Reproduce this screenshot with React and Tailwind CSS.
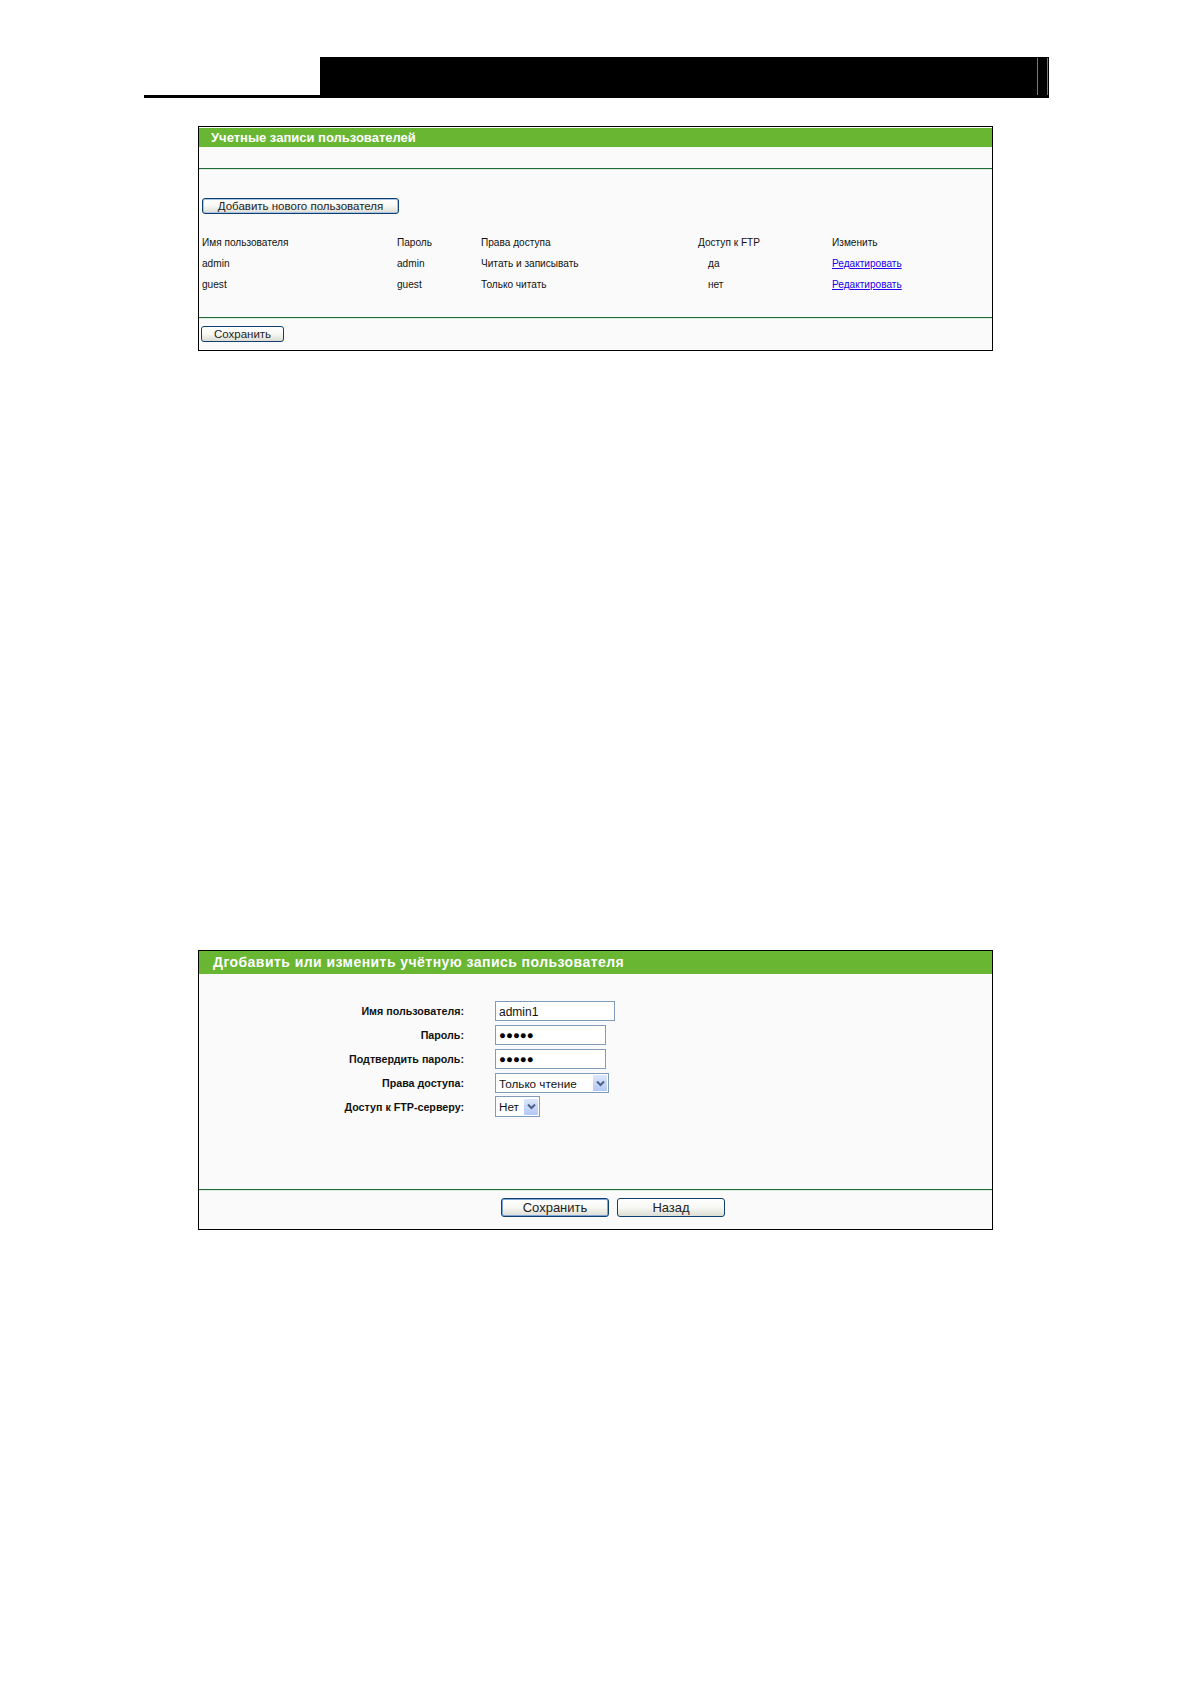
import React from 'react';

const rows = [
  { name: 'admin', password: 'admin', rights: 'Читать и записывать', ftp: 'да' },
  { name: 'guest', password: 'guest', rights: 'Только читать', ftp: 'нет' },
];

const COLS = 'grid grid-cols-[195px_84px_217px_134px_1fr] items-center h-[21px]';

function WinButton({ className, children }) {
  return (
    <button
      type="button"
      className={`flex items-center justify-center rounded-[3px] border border-[#0f3f6f] bg-gradient-to-b from-white via-[#f8f8f4] to-[#dcdcd4] pt-px text-[#222] ${className}`}
    >
      {children}
    </button>
  );
}

function SelectBox({ className, value }) {
  return (
    <div className={`flex items-center justify-between border border-[#7f9db9] bg-white pl-[3px] pr-px text-[11.7px] text-[#111] ${className}`}>
      <span className="pt-px">{value}</span>
      <span className="flex h-[16px] w-[14px] items-center justify-center rounded-[1px] bg-gradient-to-b from-[#dce6fb] to-[#b4c8f4]">
        <svg width="9" height="7" viewBox="0 0 9 7" fill="none" stroke="#4d6185" strokeWidth="2">
          <path d="M1 1.5l3.5 3.5L8 1.5" />
        </svg>
      </span>
    </div>
  );
}

function FormRow({ label, className, children }) {
  return (
    <div className={`flex items-center ${className}`}>
      <div className="w-[265px] pt-px text-right text-[10.7px] font-bold text-[#111]">{label}</div>
      <div className="ml-[31px]">{children}</div>
    </div>
  );
}

function PasswordBox() {
  return (
    <div className="flex h-[20px] w-[111px] items-center border border-[#7f9db9] bg-white pl-[3px] pt-px text-[11.5px] leading-none text-black">●●●●●</div>
  );
}

function Divider() {
  return <div className="h-[2px] border-t border-[#1c6b35] bg-[#dfe8df]" />;
}

export default function App() {
  return (
    <div className="h-[1684px] bg-white pt-[57px] font-['Liberation_Sans',Arial,sans-serif]">
      {/* page header band */}
      <div className="ml-[144px] flex h-[41px] w-[905px] items-end">
        <div className="h-[3px] w-[176px] bg-black" />
        <div className="flex h-[41px] flex-1 justify-end gap-[9px] bg-black pr-[1px] pt-[1px]">
          <div className="h-[37px] w-px bg-[#777]" />
          <div className="h-[37px] w-px bg-[#777]" />
        </div>
      </div>

      {/* accounts list */}
      <div className="ml-[198px] mt-[28px] h-[225px] w-[795px] border border-black bg-[#fafafa] pt-px">
        <div className="flex h-[19px] items-center bg-[#68b632] pl-[12px] text-[13px] font-bold text-white">
          Учетные записи пользователей
        </div>
        <div className="h-[21px]" />
        <Divider />
        <div className="px-[3px]">
          <WinButton className="mt-[28px] h-[16px] w-[197px] text-[11.5px] shadow-[inset_0_0_0_1px_#a9c4e4]">Добавить нового пользователя</WinButton>
          <div className="mt-[18px] text-[10.1px] text-[#111]">
            <div className={COLS}>
              <div>Имя пользователя</div>
              <div>Пароль</div>
              <div>Права доступа</div>
              <div>Доступ к FTP</div>
              <div>Изменить</div>
            </div>
            {rows.map((row) => (
              <div key={row.name} className={COLS}>
                <div>{row.name}</div>
                <div>{row.password}</div>
                <div>{row.rights}</div>
                <div className="pl-[10px]">{row.ftp}</div>
                <a href="#" className="text-[#2200ee] underline">Редактировать</a>
              </div>
            ))}
          </div>
        </div>
        <div className="mt-[22px]">
          <Divider />
        </div>
        <div className="px-[2px]">
          <WinButton className="mt-[7px] h-[16px] w-[83px] text-[11.5px]">Сохранить</WinButton>
        </div>
      </div>

      {/* add or edit account form */}
      <div className="ml-[198px] mt-[599px] h-[280px] w-[795px] border border-black bg-[#fafafa]">
        <div className="flex h-[23px] items-center bg-[#68b632] pl-[14px] text-[14px] font-bold tracking-[0.45px] text-white">
          Дгобавить или изменить учётную запись пользователя
        </div>
        <div className="h-[215px] pt-[27px]">
          <FormRow label="Имя пользователя:" className="h-[20px]">
            <div className="flex h-[20px] w-[120px] items-center border border-[#7f9db9] bg-white pl-[3px] pt-px text-[12px] text-[#111]">admin1</div>
          </FormRow>
          <FormRow label="Пароль:" className="mt-[4px] h-[20px]">
            <PasswordBox />
          </FormRow>
          <FormRow label="Подтвердить пароль:" className="mt-[4px] h-[20px]">
            <PasswordBox />
          </FormRow>
          <FormRow label="Права доступа:" className="mt-[4px] h-[20px]">
            <SelectBox value="Только чтение" className="h-[20px] w-[114px]" />
          </FormRow>
          <FormRow label="Доступ к FTP-серверу:" className="mt-[3px] h-[21px]">
            <SelectBox value="Нет" className="h-[21px] w-[45px]" />
          </FormRow>
        </div>
        <Divider />
        <div className="ml-[302px] mt-[7px] flex gap-[8px]">
          <WinButton className="h-[19px] w-[108px] text-[13px] shadow-[inset_0_0_0_1px_#7fa6d6]">Сохранить</WinButton>
          <WinButton className="h-[19px] w-[108px] text-[13px]">Назад</WinButton>
        </div>
      </div>
    </div>
  );
}
